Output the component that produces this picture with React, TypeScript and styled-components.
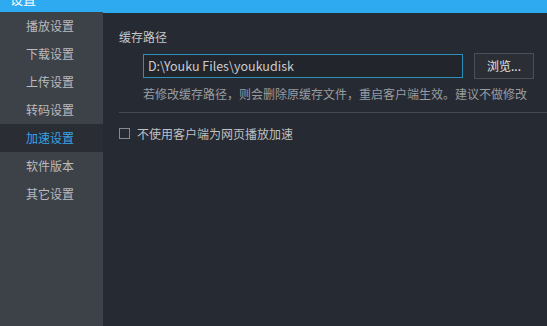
import React, { FC } from 'react'
import styled, { createGlobalStyle } from 'styled-components'

const GlobalStyle = createGlobalStyle`
  html, body { margin: 0; padding: 0; background: #262a32; }
  body { font-family: 'Noto Sans CJK SC', 'Noto Sans', sans-serif; }
`

const Window = styled.div`
  width: 547px;
  height: 326px;
  display: flex;
  flex-direction: column;
  overflow: hidden;
  background: #262a32;
`

const TitleBar = styled.div`
  height: 13px;
  flex: none;
  background: #2eaaf0;
  overflow: hidden;
  padding-left: 10px;
  color: #fff;
  font-size: 13px;
  line-height: 13px;
`

const TitleText = styled.span`
  display: block;
  margin-top: -8px;
`

const Body = styled.div`
  flex: 1;
  display: flex;
  min-height: 0;
`

const Sidebar = styled.div`
  width: 103px;
  flex: none;
  background: #3d4148;
  display: flex;
  flex-direction: column;
  margin-top: -1px;
`

const NavItem = styled.div<{ $active?: boolean }>`
  height: 28px;
  line-height: 28px;
  padding-left: 26px;
  font-size: 12px;
  color: ${(p) => (p.$active ? '#36a5e6' : '#b9bbbf')};
  background: ${(p) => (p.$active ? '#2a2d34' : 'transparent')};
`

const Main = styled.div`
  flex: 1;
  padding: 16px 0 0 16px;
  display: flex;
  flex-direction: column;
`

const Label = styled.div`
  font-size: 12px;
  line-height: 16px;
  color: #c4c6ca;
`

const PathRow = styled.div`
  display: flex;
  align-items: center;
  gap: 11px;
  margin: 8px 0 0 24px;
`

const PathInput = styled.div`
  width: 314px;
  height: 22px;
  border: 1px solid #2b8fb8;
  background: #22252b;
  color: #c9cbcf;
  font-size: 12.5px;
  line-height: 22px;
  padding-left: 4px;
  box-sizing: content-box;
`

const Button = styled.div`
  width: 58px;
  height: 24px;
  border: 1px solid #4c4f56;
  background: #2b2e35;
  color: #e2e3e5;
  font-size: 12px;
  line-height: 24px;
  text-align: center;
`

const Hint = styled.div`
  margin: 6px 0 0 24px;
  font-size: 12px;
  line-height: 18px;
  color: #9a9ca1;
`

const Divider = styled.div`
  height: 1px;
  background: #474a52;
  margin-top: 9px;
`

const CheckRow = styled.div`
  display: flex;
  align-items: center;
  gap: 7px;
  margin-top: 12px;
  font-size: 12px;
  color: #bfc1c5;
`

const Box = styled.div`
  width: 9px;
  height: 9px;
  border: 1px solid #85888e;
`

const items = ['播放设置', '下载设置', '上传设置', '转码设置', '加速设置', '软件版本', '其它设置']

const App: FC = () => {
  return (
    <>
      <GlobalStyle />
      <Window>
        <TitleBar>
          <TitleText>设置</TitleText>
        </TitleBar>
        <Body>
          <Sidebar>
            {items.map((it) => (
              <NavItem key={it} $active={it === '加速设置'}>{it}</NavItem>
            ))}
          </Sidebar>
          <Main>
            <Label>缓存路径</Label>
            <PathRow>
              <PathInput>D:\Youku Files\youkudisk</PathInput>
              <Button>浏览...</Button>
            </PathRow>
            <Hint>若修改缓存路径，则会删除原缓存文件，重启客户端生效。建议不做修改</Hint>
            <Divider />
            <CheckRow>
              <Box />
              <span>不使用客户端为网页播放加速</span>
            </CheckRow>
          </Main>
        </Body>
      </Window>
    </>
  )
}

export default App
